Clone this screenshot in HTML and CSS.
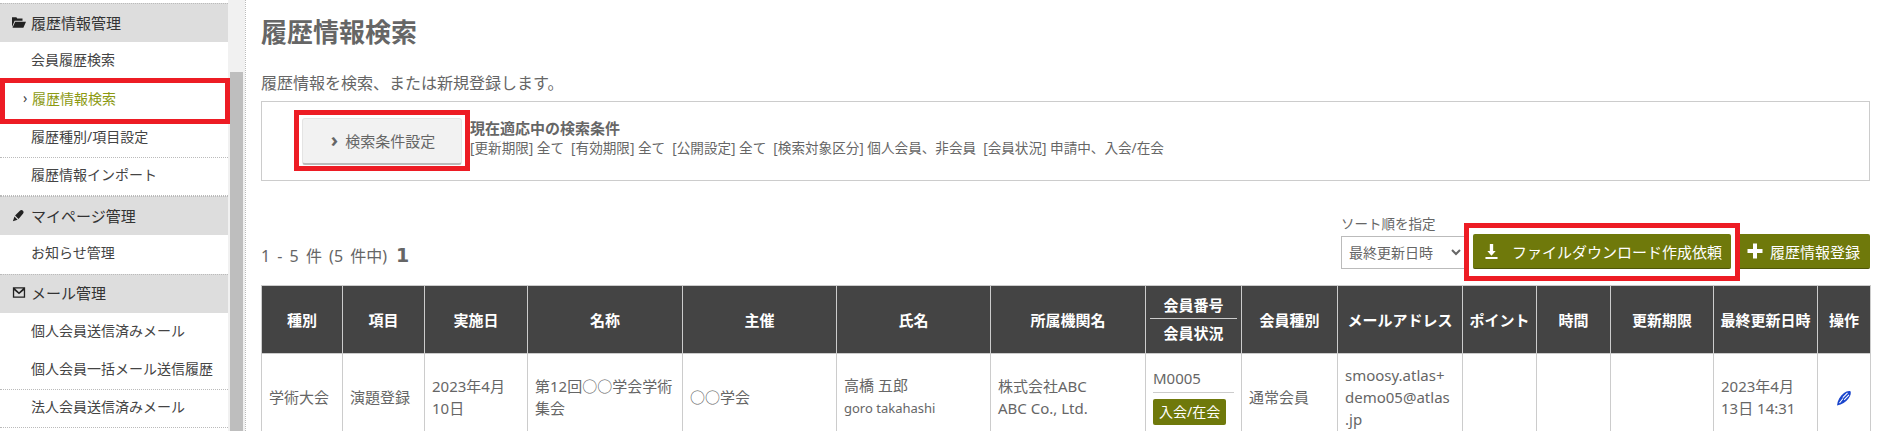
FILE: index.html
```html
<!DOCTYPE html>
<html lang="ja">
  <head>
    <meta charset="UTF-8" />
    <title>履歴情報検索</title>
    <link rel="stylesheet" href="styles.css">
  </head>
  <body>
    <div class="sidebar">
      <div class="group">
        <svg class="group-icon" viewBox="0 0 16 14"><path d="M0 3V1h5l1 1.500h6V5H3L0 12zM3.600 6H16l-3 7H0.600z"/></svg>
        履歴情報管理
      </div>
      <a class="item" href="#">会員履歴検索</a>
      <a class="item active" href="#">履歴情報検索</a>
      <a class="item" href="#">履歴種別/項目設定</a>
      <a class="item" href="#">履歴情報インポート</a>
      <div class="group">
        <svg class="group-icon" viewBox="0 0 16 14"><path d="M9 1.500c1-1 2.500-1 3.500 0s1 2.500 0 3.500L7.500 11 3.500 7zM2.800 8l3.600 3.800L1 13.500z"/></svg>
        マイページ管理
      </div>
      <a class="item" href="#">お知らせ管理</a>
      <div class="group">
        <svg class="group-icon" viewBox="0 0 16 14"><path fill-rule="evenodd" d="M1 1h14v12H1zM2.500 4.500v7h11v-7L8 9zM3.500 2.500 8 6.800l4.500-4.300z"/></svg>
        メール管理
      </div>
      <a class="item" href="#">個人会員送信済みメール</a>
      <a class="item" href="#">個人会員一括メール送信履歴</a>
      <a class="item" href="#">法人会員送信済みメール</a>
    </div>
    <div class="scrollbar"><div class="thumb"></div></div>

    <div class="main">
      <h1>履歴情報検索</h1>
      <p class="lead">履歴情報を検索、または新規登録します。</p>

      <div class="search-panel">
        <button class="search-btn"><span class="chev">›</span>検索条件設定</button>
        <div class="conditions">
          <div class="cond-title">現在適応中の検索条件</div>
          <div class="cond-text">[更新期限] 全て&nbsp; [有効期限] 全て&nbsp; [公開設定] 全て&nbsp; [検索対象区分] 個人会員、非会員&nbsp; [会員状況] 申請中、入会/在会</div>
        </div>
      </div>

      <div class="toolbar">
        <div class="count">1 - 5 件 (5 件中)<b>1</b></div>
        <div class="actions">
          <div class="sort">
            <label>ソート順を指定</label>
            <select><option>最終更新日時</option></select>
          </div>
          <button class="btn btn-dl">
            <svg viewBox="0 0 14 16"><path d="M5.200 0h3.600v7.500h2.700L7 12.500 2.500 7.500h2.700zM.5 13.800h13V16H.5z"/></svg>
            ファイルダウンロード作成依頼
          </button>
          <button class="btn btn-add">
            <svg viewBox="0 0 16 16"><path d="M6 .5h4V6h5.500v4H10v5.500H6V10H.5V6H6z"/></svg>
            履歴情報登録
          </button>
        </div>
      </div>

      <table class="list">
        <colgroup>
          <col class="w81"><col class="w82"><col class="w103"><col class="w155"><col class="w154"><col class="w154"><col class="w155">
          <col class="w96"><col class="w96"><col class="w125"><col class="w74"><col class="w74"><col class="w103"><col class="w104"><col class="w53">
        </colgroup>
        <thead>
          <tr>
            <th>種別</th>
            <th>項目</th>
            <th>実施日</th>
            <th>名称</th>
            <th>主催</th>
            <th>氏名</th>
            <th>所属機関名</th>
            <th><span class="th-top">会員番号</span><span class="th-bottom">会員状況</span></th>
            <th>会員種別</th>
            <th>メールアドレス</th>
            <th>ポイント</th>
            <th>時間</th>
            <th>更新期限</th>
            <th>最終更新日時</th>
            <th>操作</th>
          </tr>
        </thead>
        <tbody>
          <tr>
            <td>学術大会</td>
            <td>演題登録</td>
            <td>2023年4月10日</td>
            <td>第12回○○学会学術集会</td>
            <td>○○学会</td>
            <td>高橋 五郎<br><small>goro takahashi</small></td>
            <td>株式会社ABC<br>ABC Co., Ltd.</td>
            <td class="member">
              <div class="member-no">M0005</div>
              <span class="badge">入会/在会</span>
            </td>
            <td>通常会員</td>
            <td class="mail">smoosy.atlas+<br>demo05@atlas<br>.jp</td>
            <td></td>
            <td></td>
            <td></td>
            <td>2023年4月13日 14:31</td>
            <td class="op">
              <svg viewBox="0 0 16 16"><path d="M1 15.500C1.500 10.500 4 6 8 3c2-1.500 4.500-2.300 6.500-1.800C15.300 3 14.500 6 12.500 8.500 9.800 12 6 14.500 1 15.500z" fill="#1a45cc"/><path d="M3.500 13 7 8.500M6.800 7.600 11.500 2.800M8.200 9.800 13 4.800" fill="none" stroke="#fff" stroke-width="1.100"/></svg>
            </td>
          </tr>
        </tbody>
      </table>
    </div>

    <!-- red annotation frames from the manual -->
    <div class="mark mark-side"></div>
    <div class="mark mark-search"></div>
    <div class="mark mark-dl"></div>
  </body>
</html>
```

FILE: styles.css
```css
* {
  box-sizing: border-box;
}
body {
  margin: 0;
  width: 100vw;
  height: 100vh;
  overflow: hidden;
  display: flex;
  align-items: flex-start;
  position: relative;
  background: #fff;
  color: #666;
  font-family: "Noto Sans", "Noto Sans CJK JP", sans-serif;
  font-size: 15px;
}

/* Sidebar */
.sidebar {
  width: 228px;
  flex: none;
  padding-top: 3px;
}
.group {
  height: 39px;
  display: flex;
  align-items: center;
  gap: 5px;
  padding: 0 0 2px 12px;
  background: #ddd;
  border-top: 1px dotted #bbb;
  color: #333;
  font-size: 15px;
}
.group-icon {
  width: 14px;
  height: 13px;
  fill: #222;
}
.item {
  display: flex;
  align-items: center;
  height: 38.5px;
  padding: 0 0 4px 31px;
  color: #444;
  font-size: 14px;
  text-decoration: none;
  border-bottom: 1px dotted #bbb;
}
.item.active {
  color: #8c9a12;
  border-bottom: 0;
  padding-left: 32px;
  position: relative;
}
.item.active::before {
  content: "›";
  position: absolute;
  left: 23px;
  color: #444;
}
.group + .item {
  border-bottom: 0;
}

.scrollbar {
  width: 17px;
  height: 431px;
  flex: none;
  padding: 72px 2px 0;
  background: #f1f1f1;
}
.thumb {
  width: 13px;
  height: 359px;
  background: #bebebe;
}

/* Main area */
.main {
  flex: 1;
  min-width: 0;
  padding: 0 23px 0 15px;
  border-left: 1px dotted #bbb;
  height: 431px;
}
h1 {
  margin: 13px 0 0;
  font-size: 26px;
  line-height: 38px;
  color: #666;
}
.lead {
  margin: 20px 0 0;
  font-size: 16px;
  line-height: 24px;
}

.search-panel {
  margin-top: 6px;
  height: 80px;
  display: flex;
  align-items: center;
  gap: 8px;
  padding-left: 40px;
  border: 1px solid #ccc;
}
.search-btn {
  width: 160px;
  height: 47px;
  padding-left: 8px;
  font: inherit;
  color: #666;
  background: #f2f2f2;
  border: 1px solid #e4e4e4;
  border-bottom: 2px solid #bbb;
  border-radius: 3px;
}
.chev {
  font-weight: bold;
  margin-right: 7px;
  font-size: 20px;
  line-height: 1;
}
.conditions {
  padding-bottom: 6px;
}
.cond-title {
  font-weight: bold;
  line-height: 20px;
}
.cond-text {
  font-size: 13.6px;
  line-height: 20px;
}

.toolbar {
  margin-top: 35px;
  display: flex;
  justify-content: space-between;
  align-items: flex-end;
}
.count {
  font-size: 16px;
  line-height: 24px;
  margin-bottom: 1px;
  word-spacing: 3px;
}
.count b {
  margin-left: 9px;
  font-family: "DejaVu Sans", sans-serif;
  font-size: 19px;
}
.actions {
  display: flex;
  align-items: flex-end;
  gap: 4px;
}
.sort {
  display: flex;
  flex-direction: column;
  margin-right: 4px;
}
.sort label {
  font-size: 13.5px;
  line-height: 16px;
  margin-bottom: 4px;
}
.sort select {
  width: 124px;
  height: 33px;
  padding-left: 3px;
  font: inherit;
  font-size: 14px;
  color: #666;
  background: #fff;
  border: 1px solid #bbb;
}
.btn {
  height: 35px;
  display: flex;
  align-items: center;
  font: inherit;
  color: #fff;
  background: #6f790b;
  border: 0;
  border-bottom: 1px solid #4e5608;
  border-radius: 2px;
}
.btn svg {
  fill: #fff;
}
.btn-dl {
  width: 258px;
  padding-left: 12px;
}
.btn-dl svg {
  width: 13px;
  height: 15px;
  margin-right: 14px;
}
.btn-add {
  width: 135px;
  padding-left: 12px;
}
.btn-add svg {
  width: 16px;
  height: 16px;
  margin-right: 7px;
}

/* Result table */
.list {
  margin-top: 16px;
  width: 1609px;
  table-layout: fixed;
  border-collapse: collapse;
}
.w53 { width: 53px; }
.w74 { width: 74px; }
.w81 { width: 81px; }
.w82 { width: 82px; }
.w96 { width: 96px; }
.w103 { width: 103px; }
.w104 { width: 104px; }
.w125 { width: 125px; }
.w154 { width: 154px; }
.w155 { width: 155px; }
.list th {
  height: 68px;
  padding: 0 4px;
  background: #444;
  color: #fff;
  font-size: 15px;
  font-family: "Noto Sans CJK JP", sans-serif;
  border: 1px solid #ccc;
}
.th-top,
.th-bottom {
  display: block;
  line-height: 27px;
}
.th-top {
  border-bottom: 1px solid #ccc;
}
.th-bottom {
  padding-bottom: 2px;
}
.list td {
  height: 86px;
  padding: 0 7px;
  border: 1px solid #ccc;
  line-height: 22px;
  font-size: 15px;
  overflow-wrap: anywhere;
}
.list small {
  font-size: 13px;
}
.member-no {
  line-height: 24px;
  padding-bottom: 2px;
  margin-bottom: 6px;
  border-bottom: 1px solid #ccc;
}
.list .member {
  padding-bottom: 2px;
}
.badge {
  display: block;
  width: fit-content;
  padding: 0 6px;
  height: 26px;
  line-height: 25px;
  font-size: 14px;
  color: #fff;
  background: #6f790b;
  border-radius: 2px;
}
.op {
  text-align: center;
}
.op svg {
  width: 16px;
  height: 16px;
  vertical-align: middle;
}

/* Red frames drawn over the page */
.mark {
  position: absolute;
  border: 5px solid #ed1c24;
}
.mark-side {
  left: 0;
  top: 78px;
  width: 230px;
  height: 46px;
}
.mark-search {
  left: 294px;
  top: 110px;
  width: 176px;
  height: 61px;
}
.mark-dl {
  left: 1464px;
  top: 223px;
  width: 276px;
  height: 58px;
}
```
